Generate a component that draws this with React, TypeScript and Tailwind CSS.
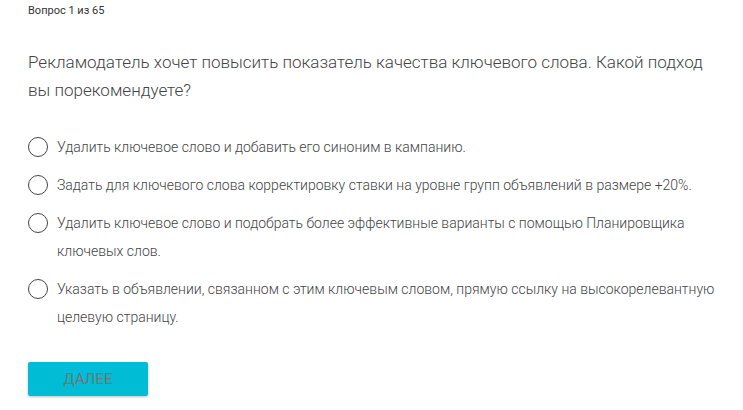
import React from "react";

const options = [
  "Удалить ключевое слово и добавить его синоним в кампанию.",
  "Задать для ключевого слова корректировку ставки на уровне групп объявлений в размере +20%.",
  "Удалить ключевое слово и подобрать более эффективные варианты с помощью Планировщика ключевых слов.",
  "Указать в объявлении, связанном с этим ключевым словом, прямую ссылку на высокорелевантную целевую страницу.",
];

export default function App() {
  return (
    <div
      className="w-[743px] h-[410px] bg-white overflow-hidden px-[28px]"
      style={{ fontFamily: "Roboto, 'Noto Sans', sans-serif" }}
    >
      <div className="pt-[4px] text-[11px] leading-[14px] text-[#333]">Вопрос 1 из 65</div>
      <div className="mt-[30px] text-[17px] font-light leading-[28px] text-[#444] pr-[10px]">
        Рекламодатель хочет повысить показатель качества ключевого слова. Какой подход вы порекомендуете?
      </div>
      <div className="mt-[29px] flex flex-col gap-[10px]">
        {options.map((o, i) => (
          <div key={i} className="flex items-start">
            <div className="w-[20px] h-[20px] mt-[4px] rounded-full border border-[#444] shrink-0" />
            <div className="ml-[9px] text-[14px] font-light leading-[28px] text-[#444]">{o}</div>
          </div>
        ))}
      </div>
      <button className="mt-[31px] w-[120px] h-[34px] rounded-[2px] bg-[#00bcd4] shadow-[0_1px_3px_rgba(0,0,0,0.25)] text-[15px] leading-[34px] text-[#6f7778] uppercase">
        Далее
      </button>
    </div>
  );
}
